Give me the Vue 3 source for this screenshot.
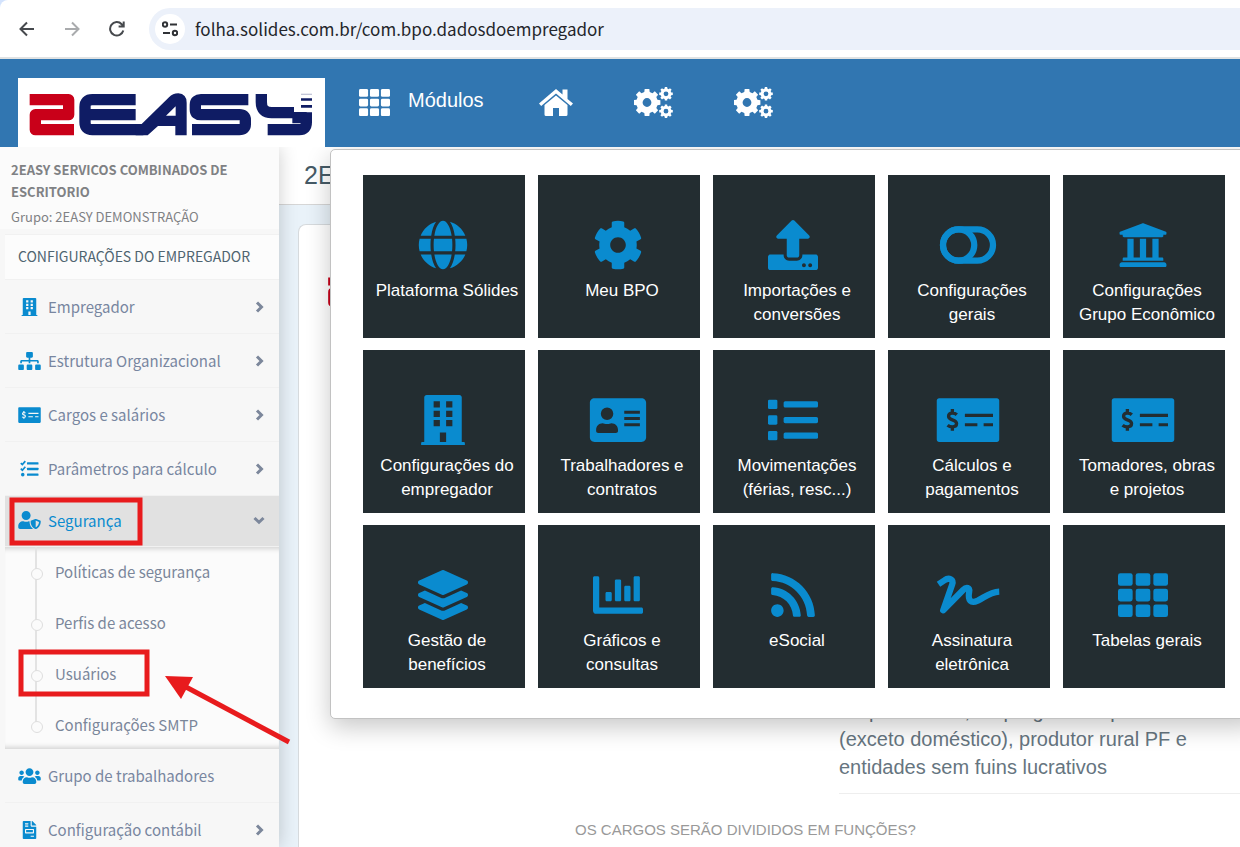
<script setup>
function gear(cx, cy, outer, inner, hole, teeth) {
  const pts = []
  const step = (Math.PI * 2) / teeth
  for (let i = 0; i < teeth; i++) {
    const a = i * step
    const corners = [[-0.32, inner], [-0.22, outer], [0.22, outer], [0.32, inner]]
    corners.forEach(([f, r]) => {
      pts.push(`${(cx + r * Math.cos(a + f * step)).toFixed(2)} ${(cy + r * Math.sin(a + f * step)).toFixed(2)}`)
    })
  }
  return `M${pts.join('L')}ZM${cx - hole} ${cy}a${hole} ${hole} 0 1 0 ${hole * 2} 0a${hole} ${hole} 0 1 0 ${-hole * 2} 0Z`
}

const gridCells = [0, 1, 2].flatMap((r) =>
  [0, 1, 2].map((c) => `<rect x="${c * 181}" y="${32 + r * 160}" width="150" height="130" rx="24"/>`)
).join('')

const windows = [64, 160, 256].flatMap((y) => [128, 256].map((x) => `M${x} ${y}h64v64h-64z`)).join('')

const icons = {
  globe: { w: 496, body: '<path d="M336.5 160C322 70.7 287.8 8 248 8s-74 62.7-88.5 152h177zM152 256c0 22.2 1.2 43.5 3.3 64h185.3c2.1-20.5 3.3-41.8 3.3-64s-1.2-43.5-3.3-64H155.3c-2.1 20.5-3.3 41.8-3.3 64zm324.7-96c-28.6-67.9-86.5-120.4-158-141.6 24.4 33.8 41.2 84.7 50 141.6h108zM177.2 18.4C105.8 39.6 47.8 92.1 19.3 160h108c8.7-56.9 25.5-107.8 49.9-141.6zM487.4 192H372.7c2.1 21 3.3 42.5 3.3 64s-1.2 43-3.3 64h114.6c5.5-20.5 8.6-41.8 8.6-64s-3.1-43.5-8.5-64zM120 256c0-21.5 1.2-43 3.3-64H8.6C3.2 212.5 0 233.8 0 256s3.2 43.5 8.6 64h114.6c-2-21-3.2-42.5-3.2-64zm39.5 96c14.5 89.3 48.7 152 88.5 152s74-62.7 88.5-152h-177zm159.3 141.6c71.4-21.2 129.4-73.7 158-141.6h-108c-8.8 56.9-25.6 107.8-50 141.6zM19.3 352c28.6 67.9 86.5 120.4 158 141.6-24.4-33.8-41.2-84.7-50-141.6h-108z"/>' },
  cog: { w: 512, body: '<path d="M487.4 315.7l-42.6-24.6c4.3-23.2 4.3-47 0-70.2l42.6-24.6c4.9-2.8 7.1-8.6 5.5-14-11.1-35.6-30-67.8-54.7-94.6-3.8-4.1-10-5.1-14.8-2.3L380.8 110c-17.9-15.4-38.5-27.3-60.8-35.1V25.8c0-5.6-3.9-10.5-9.4-11.7-36.7-8.2-74.3-7.8-109.2 0-5.5 1.2-9.4 6.1-9.4 11.7V75c-22.2 7.9-42.8 19.8-60.8 35.1L88.7 85.5c-4.9-2.8-11-1.9-14.8 2.3-24.7 26.7-43.6 58.9-54.7 94.6-1.7 5.4.6 11.2 5.5 14L67.3 221c-4.3 23.2-4.3 47 0 70.2l-42.6 24.6c-4.9 2.8-7.1 8.6-5.5 14 11.1 35.6 30 67.8 54.7 94.6 3.8 4.1 10 5.1 14.8 2.3l42.6-24.6c17.9 15.4 38.5 27.3 60.8 35.1v49.2c0 5.6 3.9 10.5 9.4 11.7 36.7 8.2 74.3 7.8 109.2 0 5.5-1.2 9.4-6.1 9.4-11.7v-49.2c22.2-7.9 42.8-19.8 60.8-35.1l42.6 24.6c4.9 2.8 11 1.9 14.8-2.3 24.7-26.7 43.6-58.9 54.7-94.6 1.5-5.5-.7-11.3-5.6-14.1zM256 336c-44.1 0-80-35.9-80-80s35.9-80 80-80 80 35.9 80 80-35.9 80-80 80z"/>' },
  upload: { w: 512, body: '<path d="M296 384h-80c-13.3 0-24-10.7-24-24V192h-87.7c-17.8 0-26.7-21.5-14.1-34.1L242.3 5.7c7.5-7.5 19.8-7.5 27.3 0l152.2 152.2c12.6 12.6 3.7 34.1-14.1 34.1H320v168c0 13.3-10.7 24-24 24zm216-8v112c0 13.3-10.7 24-24 24H24c-13.3 0-24-10.7-24-24V376c0-13.3 10.7-24 24-24h136v8c0 30.9 25.1 56 56 56h80c30.9 0 56-25.1 56-56v-8h136c13.3 0 24 10.7 24 24zm-124 88c0-11-9-20-20-20s-20 9-20 20 9 20 20 20 20-9 20-20zm64 0c0-11-9-20-20-20s-20 9-20 20 9 20 20 20 20-9 20-20z"/>' },
  toggle: { w: 576, body: '<g fill="none" stroke="currentColor" stroke-width="64"><rect x="32" y="96" width="512" height="320" rx="160"/><circle cx="192" cy="256" r="160"/></g>' },
  bank: { w: 512, body: '<path d="M496 128v16a8 8 0 0 1-8 8h-24v12c0 6.627-5.373 12-12 12H60c-6.627 0-12-5.373-12-12v-12H24a8 8 0 0 1-8-8v-16a8 8 0 0 1 4.941-7.392l232-88a7.996 7.996 0 0 1 6.118 0l232 88A8 8 0 0 1 496 128zm-24 304H40c-13.255 0-24 10.745-24 24v16a8 8 0 0 0 8 8h464a8 8 0 0 0 8-8v-16c0-13.255-10.745-24-24-24zM96 192v192H60c-6.627 0-12 5.373-12 12v20h416v-20c0-6.627-5.373-12-12-12h-36V192h-64v192h-64V192h-64v192h-64V192H96z"/>' },
  building: { w: 448, body: `<path fill-rule="evenodd" d="M436 480h-20V24c0-13-11-24-24-24H56C43 0 32 11 32 24v456H12c-7 0-12 5-12 12v20h448v-20c0-7-5-12-12-12z${windows}M192 384h64v96h-64z"/>` },
  idcard: { w: 576, body: '<path fill-rule="evenodd" d="M48 32H528c27 0 48 21 48 48V432c0 27-21 48-48 48H48c-27 0-48-21-48-48V80c0-27 21-48 48-48zM176 128a64 64 0 1 0 0 128a64 64 0 1 0 0-128zM131 288c-38 0-67 29-67 67v13c0 11 9 20 22 20H266c13 0 22-9 22-20v-13c0-38-29-67-67-67c-12 0-24 10-45 10s-33-10-45-10zM352 160h160v32h-160zM352 224h160v32h-160zM352 288h160v32h-160z"/>' },
  list: { w: 512, body: '<rect x="0" y="48" width="96" height="96" rx="14"/><rect x="0" y="208" width="96" height="96" rx="14"/><rect x="0" y="368" width="96" height="96" rx="14"/><rect x="160" y="64" width="352" height="64" rx="16"/><rect x="160" y="224" width="352" height="64" rx="16"/><rect x="160" y="384" width="352" height="64" rx="16"/>' },
  money: { w: 640, body: '<path fill-rule="evenodd" d="M24 32H616c13 0 24 11 24 24V456c0 13-11 24-24 24H24c-13 0-24-11-24-24V56c0-13 11-24 24-24zM288 192h288v32h-288zM288 288h128v32h-128zM480 288h96v32h-96z"/><path class="cut" fill="none" stroke-width="34" d="M205 202c-12-12-26-16-45-16c-24 0-39 14-39 32c0 18 14 28 39 36c30 9 43 20 43 39c0 20-16 33-42 33c-20 0-36-5-50-17M160 144v44M160 322v44"/>' },
  layers: { w: 512, body: '<path d="M12.41 148.02l232.94 105.67c6.8 3.09 14.49 3.09 21.29 0l232.94-105.67c16.55-7.51 16.55-32.52 0-40.03L266.65 2.31a25.607 25.607 0 0 0-21.29 0L12.41 107.98c-16.55 7.51-16.55 32.53 0 40.04zm487.18 88.28l-58.09-26.33-161.64 73.27c-7.56 3.43-15.59 5.17-23.86 5.17s-16.29-1.74-23.86-5.17L70.51 209.97l-58.1 26.33c-16.55 7.5-16.55 32.5 0 40l232.94 105.59c6.8 3.08 14.49 3.08 21.29 0L499.59 276.3c16.55-7.5 16.55-32.5 0-40zm0 127.8l-57.87-26.23-161.86 73.37c-7.56 3.43-15.59 5.17-23.86 5.17s-16.29-1.74-23.86-5.17L70.29 337.87 12.41 364.1c-16.55 7.5-16.55 32.5 0 40l232.94 105.59c6.8 3.08 14.49 3.08 21.29 0L499.59 404.1c16.55-7.5 16.55-32.5 0-40z"/>' },
  chart: { w: 512, body: '<path d="M332.8 320h38.4c6.4 0 12.8-6.4 12.8-12.8V172.8c0-6.4-6.4-12.8-12.8-12.8h-38.4c-6.4 0-12.8 6.4-12.8 12.8v134.4c0 6.4 6.4 12.8 12.8 12.8zm96 0h38.4c6.4 0 12.8-6.4 12.8-12.8V76.8c0-6.4-6.4-12.8-12.8-12.8h-38.4c-6.4 0-12.8 6.4-12.8 12.8v230.4c0 6.4 6.4 12.8 12.8 12.8zm-288 0h38.4c6.4 0 12.8-6.4 12.8-12.8v-70.4c0-6.4-6.4-12.8-12.8-12.8h-38.4c-6.4 0-12.8 6.4-12.8 12.8v70.4c0 6.4 6.4 12.8 12.8 12.8zm96 0h38.4c6.4 0 12.8-6.4 12.8-12.8V108.8c0-6.4-6.4-12.8-12.8-12.8h-38.4c-6.4 0-12.8 6.4-12.8 12.8v198.4c0 6.4 6.4 12.8 12.8 12.8zM496 384H64V80c0-8.84-7.16-16-16-16H16C7.16 64 0 71.16 0 80v336c0 17.67 14.33 32 32 32h464c8.84 0 16-7.16 16-16v-32c0-8.84-7.16-16-16-16z"/>' },
  rss: { w: 448, body: '<path d="M128.081 415.959c0 35.369-28.672 64.041-64.041 64.041S0 451.328 0 415.959s28.672-64.041 64.041-64.041 64.04 28.673 64.04 64.041zm175.66 47.25c-8.354-154.6-132.185-278.587-286.95-286.95C7.656 175.765 0 183.105 0 192.253v48.069c0 8.415 6.49 15.472 14.887 16.018 111.832 7.284 201.473 96.702 208.772 208.772.547 8.397 7.604 14.887 16.018 14.887h48.069c9.149.001 16.489-7.655 15.995-16.79zm144.249.288C439.596 229.677 251.465 40.445 16.503 32.01 7.473 31.686 0 38.981 0 48.016v48.068c0 8.625 6.835 15.645 15.453 15.999 191.179 7.839 344.627 161.316 352.465 352.465.353 8.618 7.373 15.453 15.999 15.453h48.068c9.034-.001 16.329-7.474 16.005-16.504z"/>' },
  signature: { w: 640, body: '<path fill="none" stroke="currentColor" stroke-width="64" stroke-linejoin="round" d="M18 146L80 105C125 72 175 98 158 148L66 412L270 205C306 168 338 182 332 222C316 316 350 346 420 314C490 280 545 226 640 222"/>' },
  grid: { w: 512, body: gridCells },
  sitemap: { w: 640, body: '<path d="M128 352H32c-17.67 0-32 14.33-32 32v96c0 17.67 14.33 32 32 32h96c17.67 0 32-14.33 32-32v-96c0-17.67-14.33-32-32-32zm-24-80h192v48h48v-48h192v48h48v-57.59c0-21.17-17.23-38.41-38.41-38.41H344v-64h40c17.67 0 32-14.33 32-32V32c0-17.67-14.33-32-32-32H256c-17.67 0-32 14.33-32 32v96c0 17.67 14.33 32 32 32h40v64H94.41C73.23 224 56 241.23 56 262.41V320h48v-48zm264 80h-96c-17.67 0-32 14.33-32 32v96c0 17.67 14.33 32 32 32h96c17.67 0 32-14.33 32-32v-96c0-17.67-14.33-32-32-32zm240 0h-96c-17.67 0-32 14.33-32 32v96c0 17.67 14.33 32 32 32h96c17.67 0 32-14.33 32-32v-96c0-17.67-14.33-32-32-32z"/>' },
  tasks: { w: 512, body: '<rect x="184" y="62" width="328" height="66" rx="16"/><rect x="184" y="222" width="328" height="66" rx="16"/><rect x="184" y="382" width="328" height="66" rx="16"/><circle cx="64" cy="416" r="50"/><path fill="none" stroke="currentColor" stroke-width="48" d="M8 88l45 42l84-98M8 248l45 42l84-98"/>' },
  shield: { w: 640, body: '<path d="M622.3 271.1l-115.2-45c-4.1-1.6-12.6-3.7-22.2 0l-115.2 45c-10.7 4.2-17.7 14-17.7 24.9 0 111.6 68.7 188.8 132.9 213.9 9.6 3.7 18 1.6 22.2 0C558.4 489.9 640 420.5 640 296c0-10.9-7-20.7-17.7-24.9zM496 462.4V273.3l95.5 37.3c-5.6 87.1-60.9 135.4-95.5 151.8zM224 256c70.7 0 128-57.3 128-128S294.7 0 224 0 96 57.3 96 128s57.3 128 128 128zm96 40c0-2.5.8-4.8 1.1-7.2-2.5-.1-4.9-.8-7.5-.8h-16.7c-22.2 10.2-46.9 16-72.9 16s-50.6-5.8-72.9-16h-16.7C60.2 288 0 348.2 0 422.4V464c0 26.5 21.5 48 48 48h352c6.8 0 13.3-1.5 19.2-4-54-42.9-99.2-116.7-99.2-212z"/>' },
  users: { w: 640, body: '<path d="M96 224c35.3 0 64-28.7 64-64s-28.7-64-64-64-64 28.7-64 64 28.7 64 64 64zm448 0c35.3 0 64-28.7 64-64s-28.7-64-64-64-64 28.7-64 64 28.7 64 64 64zm32 32h-64c-17.6 0-33.5 7.1-45.1 18.6 40.3 22.1 68.9 62 75.1 109.4h66c17.7 0 32-14.3 32-32v-32c0-35.3-28.7-64-64-64zm-256 0c61.9 0 112-50.1 112-112S381.9 32 320 32 208 82.1 208 144s50.1 112 112 112zm76.8 32h-8.3c-20.8 10-43.9 16-68.5 16s-47.6-6-68.5-16h-8.3C179.6 288 128 339.6 128 403.2V432c0 26.5 21.5 48 48 48h288c26.5 0 48-21.5 48-48v-28.8c0-63.6-51.6-115.2-115.2-115.2zm-223.7-13.4C161.5 263.1 145.6 256 128 256H64c-35.3 0-64 28.7-64 64v32c0 17.7 14.3 32 32 32h65.9c6.3-47.4 34.9-87.3 75.2-109.4z"/>' },
  invoice: { w: 384, body: '<path d="M288 256H96v64h192v-64zm89-151L279.1 7c-4.5-4.5-10.6-7-17-7H256v128h128v-6.1c0-6.3-2.5-12.4-7-16.9zm-153 31V0H24C10.7 0 0 10.7 0 24v464c0 13.3 10.7 24 24 24h336c13.3 0 24-10.7 24-24V160H248c-13.2 0-24-10.8-24-24zM64 72c0-4.42 3.58-8 8-8h80c4.42 0 8 3.58 8 8v16c0 4.42-3.58 8-8 8H72c-4.42 0-8-3.58-8-8V72zm0 64c0-4.42 3.58-8 8-8h80c4.42 0 8 3.58 8 8v16c0 4.42-3.58 8-8 8H72c-4.42 0-8-3.58-8-8v-16zm256 304c0 4.42-3.58 8-8 8h-80c-4.42 0-8-3.58-8-8v-16c0-4.42 3.58-8 8-8h80c4.42 0 8 3.58 8 8v16zm0-200v96c0 8.84-7.16 16-16 16H80c-8.84 0-16-7.16-16-16v-96c0-8.84 7.16-16 16-16h224c8.84 0 16 7.16 16 16z"/>' }
}

const cogs = gear(13, 15.5, 13.6, 10.8, 4.4, 8) + gear(32, 6.8, 6.9, 5.4, 2.4, 8) + gear(32, 24.2, 6.9, 5.4, 2.4, 8)

const tiles = [
  { icon: 'globe', lines: ['Plataforma Sólides'] },
  { icon: 'cog', lines: ['Meu BPO'] },
  { icon: 'upload', lines: ['Importações e', 'conversões'] },
  { icon: 'toggle', lines: ['Configurações', 'gerais'] },
  { icon: 'bank', lines: ['Configurações', 'Grupo Econômico'] },
  { icon: 'building', lines: ['Configurações do', 'empregador'] },
  { icon: 'idcard', lines: ['Trabalhadores e', 'contratos'] },
  { icon: 'list', lines: ['Movimentações', '(férias, resc...)'] },
  { icon: 'money', lines: ['Cálculos e', 'pagamentos'] },
  { icon: 'money', lines: ['Tomadores, obras', 'e projetos'] },
  { icon: 'layers', lines: ['Gestão de', 'benefícios'] },
  { icon: 'chart', lines: ['Gráficos e', 'consultas'] },
  { icon: 'rss', lines: ['eSocial'] },
  { icon: 'signature', lines: ['Assinatura', 'eletrônica'] },
  { icon: 'grid', lines: ['Tabelas gerais'] }
]

const menu = [
  { icon: 'building', label: 'Empregador', arrow: true },
  { icon: 'sitemap', label: 'Estrutura Organizacional', arrow: true },
  { icon: 'money', label: 'Cargos e salários', arrow: true },
  { icon: 'tasks', label: 'Parâmetros para cálculo', arrow: true },
  {
    icon: 'shield', label: 'Segurança', arrow: true, open: true,
    children: ['Políticas de segurança', 'Perfis de acesso', 'Usuários', 'Configurações SMTP']
  },
  { icon: 'users', label: 'Grupo de trabalhadores' },
  { icon: 'invoice', label: 'Configuração contábil', arrow: true }
]
</script>

<template>
  <div class="page">
    <svg class="defs" aria-hidden="true">
      <symbol id="brand" viewBox="54 234 921 207">
        <path fill="none" stroke="#c90019" stroke-width="34" stroke-linejoin="round" d="M89 299H206V344H106V389H222" />
        <g fill="none" stroke="#0f1c64" stroke-width="34">
          <path d="M407 299H277Q255 299 255 321V367Q255 389 277 389H430M253 344H407" />
          <path d="M745 299H603Q586 299 586 314V329Q586 344 603 344H718Q736 344 736 360V373Q736 389 718 389H576" />
          <path d="M784 282V306Q784 338 815 338H882M877 353H920M919 337V367Q919 389 898 389H803" />
        </g>
        <path fill="#0f1c64" fill-rule="evenodd" d="M407 372H425L507 292Q518 280 535 280Q560 282 560 308V406H526V378H474L443 406H407ZM498 347H527V319Z" />
        <path fill="#0f1c64" d="M903 295H936V302H903ZM903 315H936V323H903Z" />
        <path fill="#c3c6d8" d="M903 281H936V285H903Z" />
      </symbol>
    </svg>

    <div class="browser">
      <button class="nav" aria-label="Voltar">
        <svg viewBox="0 0 16 16"><path d="M15 8H2M8 1.500L1.500 8L8 14.500" /></svg>
      </button>
      <button class="nav dim" aria-label="Avançar">
        <svg viewBox="0 0 16 16"><path d="M1 8H14M8 1.500L14.500 8L8 14.500" /></svg>
      </button>
      <button class="nav" aria-label="Recarregar">
        <svg viewBox="0 0 16 16"><path d="M14.300 9.500A6.700 6.700 0 1 1 12.700 3.200L14.500 5M14.700 .5V5.600H9.600" /></svg>
      </button>
      <div class="address">
        <button class="site" aria-label="Informações do site">
          <svg viewBox="0 0 16 16"><circle cx="3" cy="3.500" r="2.200" /><path d="M8 3.500H15M1 12H8" /><circle cx="13" cy="12" r="2.200" /></svg>
        </button>
        <input aria-label="Endereço" type="text" value="folha.solides.com.br/com.bpo.dadosdoempregador" />
      </div>
    </div>

    <header class="topbar">
      <a class="logo" href="#" aria-label="2EASY"><svg><use href="#brand" /></svg></a>
      <button class="modules">
        <svg class="th" viewBox="0 32 512 448" preserveAspectRatio="none" v-html="icons.grid.body"></svg>
        <span>Módulos</span>
      </button>
      <a class="home" href="#" aria-label="Início">
        <svg viewBox="0 0 34 27">
          <path d="M17 0L23.500 5.500V.5H28.500V10L34 14.500L31.800 17L17 4.600L2.200 17L0 14.500Z" />
          <path d="M17 6.600L28.500 16V25.500Q28.500 27 27 27H20V19H14V27H7Q5.500 27 5.500 25.500V16Z" />
        </svg>
      </a>
      <a class="cogs" href="#" aria-label="Configurações"><svg viewBox="0 0 39 31"><path :d="cogs" fill-rule="evenodd" /></svg></a>
      <a class="cogs" href="#" aria-label="Parâmetros"><svg viewBox="0 0 39 31"><path :d="cogs" fill-rule="evenodd" /></svg></a>
    </header>

    <div class="body">
      <aside class="sidebar">
        <div class="company">
          <strong>2EASY SERVICOS COMBINADOS DE ESCRITORIO</strong>
          <span>Grupo: 2EASY DEMONSTRAÇÃO</span>
        </div>
        <nav class="menu">
          <h2>CONFIGURAÇÕES DO EMPREGADOR</h2>
          <ul>
            <li v-for="item in menu" :key="item.label" :class="{ open: item.open }">
              <a class="row" href="#">
                <svg class="ico" :viewBox="`${icons[item.icon].w / 2 - 320} 0 640 512`" v-html="icons[item.icon].body"></svg>
                <span>{{ item.label }}</span>
                <svg v-if="item.arrow" class="chev" viewBox="0 0 12 12"><path :d="item.open ? 'M1.5 4L6 8.300L10.500 4' : 'M4 1.500L8.500 6L4 10.500'" /></svg>
              </a>
              <ul v-if="item.children" class="sub">
                <li v-for="child in item.children" :key="child"><a href="#">{{ child }}</a></li>
              </ul>
            </li>
          </ul>
        </nav>
      </aside>

      <main>
        <h1>2EASY</h1>
        <section class="card">
          <svg class="cardlogo"><use href="#brand" /></svg>
          <div class="answer">Empresa rural, empregadores por (exceto doméstico), produtor rural PF e entidades sem fuins lucrativos</div>
          <div class="question">OS CARGOS SERÃO DIVIDIDOS EM FUNÇÕES?</div>
        </section>
      </main>
    </div>

    <div class="panel">
      <a v-for="tile in tiles" :key="tile.lines[0] + tile.icon" class="tile" href="#">
        <svg :viewBox="`${icons[tile.icon].w / 2 - 320} 0 640 512`" v-html="icons[tile.icon].body"></svg>
        <span><template v-for="(line, i) in tile.lines" :key="line"><br v-if="i" />{{ line }}</template></span>
      </a>
    </div>

    <svg class="marks" viewBox="0 0 300 260" aria-hidden="true">
      <rect x="12" y="11" width="128" height="43" />
      <rect x="21" y="163" width="126" height="42" />
      <path d="M289 253L186 198" />
      <path class="head" d="M165 187L193 188L181 210Z" />
    </svg>
  </div>
</template>

<style>
body {
  background: #d3e3fd;
}
.cut {
  stroke: var(--cut);
}
</style>

<style scoped>
.page {
  position: relative;
  display: flex;
  flex-direction: column;
  height: 100vh;
  overflow: hidden;
  font-family: "Liberation Sans", Arial, sans-serif;
}
.page * {
  box-sizing: border-box;
}
a {
  color: inherit;
  text-decoration: none;
}
button {
  padding: 0;
  border: 0;
  background: none;
  color: inherit;
  font: inherit;
}
ul {
  margin: 0;
  padding: 0;
  list-style: none;
}
.defs {
  position: absolute;
  width: 0;
  height: 0;
}

.browser {
  display: flex;
  align-items: center;
  flex: none;
  height: 59px;
  padding-left: 18px;
  background: #fff;
  border-bottom: 2px solid #e0e2e3;
  border-top-left-radius: 8px;
}
.nav {
  width: 18px;
  height: 18px;
  margin-right: 27px;
  color: #46494d;
}
.nav.dim {
  color: #a9abad;
}
.nav svg {
  display: block;
  width: 16px;
  height: 16px;
  margin: auto;
  fill: none;
  stroke: currentColor;
  stroke-width: 2;
}
.address {
  display: flex;
  align-items: center;
  flex: 1;
  height: 42px;
  margin-left: -4px;
  padding-left: 6px;
  background: #ecf1fa;
  border-radius: 21px 0 0 21px;
}
.site {
  display: grid;
  place-items: center;
  width: 30px;
  height: 30px;
  border-radius: 50%;
  background: #fff;
}
.site svg {
  width: 16px;
  height: 16px;
  fill: none;
  stroke: #303236;
  stroke-width: 2;
}
.address input {
  flex: 1;
  margin-left: 10px;
  padding: 0;
  border: 0;
  background: none;
  color: #24262b;
  font: 17px "Noto Sans CJK SC", sans-serif;
  outline: 0;
}

.topbar {
  position: relative;
  z-index: 3;
  display: flex;
  align-items: flex-start;
  flex: none;
  height: 88px;
  padding-left: 18px;
  background: #3176b1;
  color: #fff;
}
.topbar svg {
  display: block;
  fill: currentColor;
}
.logo {
  width: 307px;
  margin-top: 19px;
  background: #fff;
}
.logo svg {
  width: 307px;
  height: 69px;
}
.modules {
  display: flex;
  align-items: flex-start;
  gap: 18px;
  margin: 30px 55px 0 34px;
  font-size: 20px;
  line-height: 23px;
}
.th {
  width: 31px;
  height: 27px;
}
.home svg {
  width: 34px;
  height: 27px;
  margin-top: 30px;
}
.cogs svg {
  width: 39px;
  height: 31px;
  margin-top: 28px;
}
.home {
  margin-right: 61px;
}
.cogs {
  margin-right: 61px;
}

.body {
  display: flex;
  flex: 1;
  min-height: 0;
}
.sidebar {
  position: relative;
  z-index: 1;
  flex: none;
  width: 279px;
  overflow: hidden;
  background: #f7f7f7;
  box-shadow: 0 0 18px rgba(0, 0, 0, .2);
  --cut: #f7f7f7;
}
.company {
  height: 82px;
  padding: 12px 32px 0 11px;
  background: #fbfbfb;
  color: #7f8184;
  font: 13px/22px "Noto Sans CJK SC", sans-serif;
}
.company strong {
  display: block;
}
.company span {
  display: block;
  margin-top: 3px;
}
.menu {
  margin: 5px 0 0 5px;
}
.menu h2 {
  height: 46px;
  margin: 0;
  padding-left: 13px;
  background: #fcfcfc;
  border: solid #f1f1f1;
  border-width: 1px 0;
  color: #4f6470;
  font: 14px/43px "Noto Sans CJK SC", sans-serif;
}
.row {
  display: flex;
  align-items: center;
  height: 54px;
  padding: 0 14px 0 13px;
  border-bottom: 1px solid #f1f1f1;
  color: #7886a0;
  font: 15px "Noto Sans CJK SC", sans-serif;
}
.row span {
  flex: 1;
  margin-left: 7px;
}
.ico {
  width: 23px;
  height: 18px;
  color: #0a8bcf;
  fill: currentColor;
}
.chev {
  width: 12px;
  height: 12px;
  fill: none;
  stroke: #7c879b;
  stroke-width: 3;
}
.open > .row {
  height: 51px;
  padding-bottom: 2px;
  background: #e1e1e1;
  color: #0a8bcf;
}
.sub {
  position: relative;
  height: 202px;
  padding-left: 50px;
  background: #fbfbfb;
  box-shadow: inset 0 6px 5px -4px rgba(0, 0, 0, .16), inset 0 -6px 5px -4px rgba(0, 0, 0, .16);
  font: 15px/50px "Noto Sans CJK SC", sans-serif;
  color: #7a869a;
}
.sub::before {
  content: "";
  position: absolute;
  left: 30px;
  top: 0;
  width: 2px;
  height: 176px;
  background: #e3e3e3;
}
.sub li {
  position: relative;
  height: 51px;
}
.sub li::before {
  content: "";
  position: absolute;
  left: -24px;
  top: 21px;
  width: 10px;
  height: 10px;
  border: 1px solid #dedede;
  border-radius: 50%;
  background: #fbfbfb;
}
.sub li:last-child {
  height: 49px;
}

main {
  display: flex;
  flex-direction: column;
  flex: 1;
  min-width: 0;
  background: #e9f2f9;
}
h1 {
  flex: none;
  height: 58px;
  margin: 0;
  padding-left: 25px;
  background: #fff;
  border-bottom: 1px solid #d6d6d6;
  color: #455a66;
  font-size: 25px;
  font-weight: 400;
  line-height: 57px;
}
.card {
  flex: 1;
  margin: 19px 0 0 19px;
  background: #fff;
  border: solid #d6dadd;
  border-width: 1px 0 0 1px;
  border-top-left-radius: 8px;
}
.cardlogo {
  display: block;
  width: 215px;
  height: 49px;
  margin: 41px 0 0 21px;
}
.answer {
  width: 401px;
  height: 97px;
  margin: 382px 0 0 auto;
  padding-right: 30px;
  border-bottom: 1px solid #eee;
  color: #66757f;
  font-size: 20px;
  line-height: 28px;
}
.question {
  margin: 24px 0 0 276px;
  color: #999;
  font-size: 15px;
  line-height: 24px;
}

.panel {
  position: absolute;
  z-index: 2;
  top: 149px;
  left: 330px;
  right: -18px;
  display: grid;
  grid-template-columns: repeat(5, minmax(0, 1fr));
  gap: 12px 13px;
  padding: 25px 32px 30px;
  background: #fff;
  border: 1px solid #c2c2c2;
  border-radius: 5px;
  box-shadow: 0 8px 24px rgba(0, 0, 0, .22);
}
.tile {
  height: 163px;
  padding-top: 45px;
  background: #232d31;
  color: #fff;
  font-size: 17px;
  line-height: 24px;
  text-align: center;
  white-space: nowrap;
  --cut: #232d31;
}
.tile svg {
  display: block;
  width: 64px;
  height: 50px;
  margin: 0 auto 9px 48px;
  color: #0a8bcf;
  fill: currentColor;
}
.tile span {
  display: block;
  padding-left: 6px;
}

.marks {
  position: absolute;
  z-index: 4;
  top: 489px;
  left: 0;
  width: 300px;
  height: 260px;
  fill: none;
  stroke: #e81b1d;
  stroke-width: 5;
  pointer-events: none;
}
.marks .head {
  fill: #e81b1d;
  stroke: none;
}
</style>
